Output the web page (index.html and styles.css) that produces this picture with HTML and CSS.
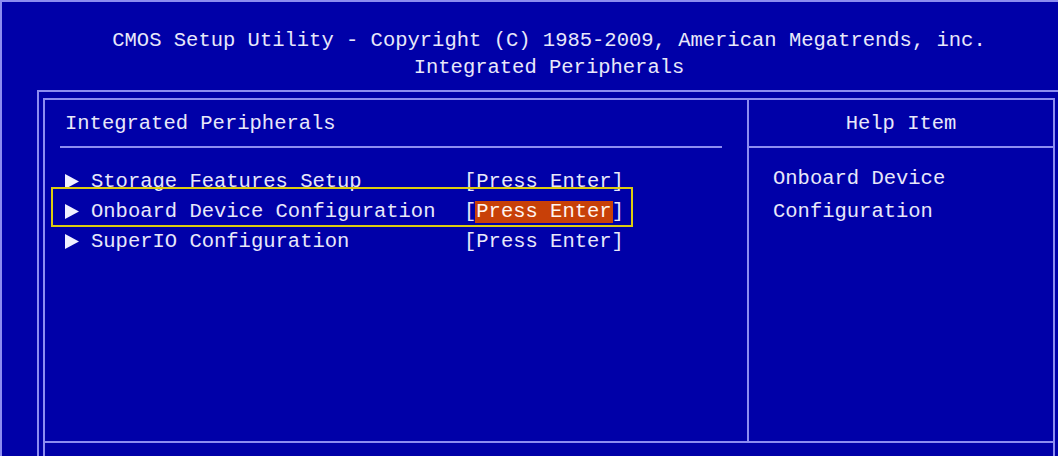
FILE: index.html
```html
<!DOCTYPE html>
<html lang="en">
  <head>
    <meta charset="UTF-8" />
    <meta name="viewport" content="width=device-width, initial-scale=1.0" />
    <title>CMOS Setup Utility</title>
    <link rel="stylesheet" href="styles.css">
  </head>
  <body>
    <div class="screen">
      <div class="bios">
        <header class="title">
          <div>CMOS Setup Utility - Copyright (C) 1985-2009, American Megatrends, inc.</div>
          <div>Integrated Peripherals</div>
        </header>

        <div class="frame">
          <div class="panel">
            <div class="main">
              <div class="main-head">Integrated Peripherals</div>
              <ul class="items">
                <li class="item">
                  <svg class="arrow" width="14" height="15" viewBox="0 0 14 15"><polygon points="0,0 14,7.5 0,15" /></svg>
                  <span class="name">Storage Features Setup</span>
                  <span class="value">[Press Enter]</span>
                </li>
                <li class="item selected">
                  <svg class="arrow" width="14" height="15" viewBox="0 0 14 15"><polygon points="0,0 14,7.5 0,15" /></svg>
                  <span class="name">Onboard Device Configuration</span>
                  <span class="value">[<span class="hl">Press Enter</span>]</span>
                </li>
                <li class="item">
                  <svg class="arrow" width="14" height="15" viewBox="0 0 14 15"><polygon points="0,0 14,7.5 0,15" /></svg>
                  <span class="name">SuperIO Configuration</span>
                  <span class="value">[Press Enter]</span>
                </li>
              </ul>
            </div>

            <div class="help">
              <div class="help-head">Help Item</div>
              <p class="help-text">Onboard Device<br>Configuration</p>
            </div>

            <div class="status"></div>
          </div>
        </div>
      </div>
    </div>
  </body>
</html>
```

FILE: styles.css
```css
body {
  margin: 0;
  height: 456px;
  overflow: hidden;
  background: #0000a8;
  color: #e8e8fa;
  font-family: "Liberation Mono", "DejaVu Sans Mono", monospace;
  font-size: 20.5px;
}

.screen {
  height: 100%;
  border-top: 2px solid #8c8cf0;
  border-left: 2px solid #8c8cf0;
}

.bios {
  width: 1024px;
  margin-left: 35px;
}

.title {
  padding-top: 25px;
  margin-bottom: 9px;
  line-height: 27px;
  text-align: center;
  white-space: nowrap;
}

.frame {
  border: 2px solid #8c8cf0;
  padding: 6px 4px;
}

.panel {
  border: 2px solid #8c8cf0;
  display: grid;
  grid-template-columns: 704px 1fr;
  grid-template-rows: 341px 60px;
}

.main {
  border-right: 2px solid #8c8cf0;
  padding: 0 25px 0 15px;
}

.main-head {
  height: 46px;
  line-height: 47px;
  padding-left: 5px;
  border-bottom: 2px solid #8c8cf0;
}

.items {
  list-style: none;
  margin: 0;
  padding: 18px 0 0 5px;
}

.item {
  display: grid;
  grid-template-columns: 14px 361px auto;
  column-gap: 12px;
  align-items: center;
  height: 30px;
  line-height: 31px;
  white-space: nowrap;
}

.arrow {
  fill: #f0f0ff;
  display: block;
}

.selected {
  position: relative;
}

.selected::after {
  content: "";
  position: absolute;
  left: -14px;
  top: -9px;
  width: 582px;
  height: 40px;
  box-sizing: border-box;
  border: 2px solid #dccc10;
  pointer-events: none;
}

.hl {
  display: inline-block;
  line-height: 22px;
  padding: 0 1px;
  margin: 0 -1px;
  background: #c84008;
  color: #fff4f0;
}

.help-head {
  height: 46px;
  line-height: 47px;
  text-align: center;
  border-bottom: 2px solid #8c8cf0;
}

.help-text {
  margin: 0;
  padding: 14px 0 0 24px;
  line-height: 33px;
}

.status {
  grid-column: 1 / -1;
  border-top: 2px solid #8c8cf0;
}
```
